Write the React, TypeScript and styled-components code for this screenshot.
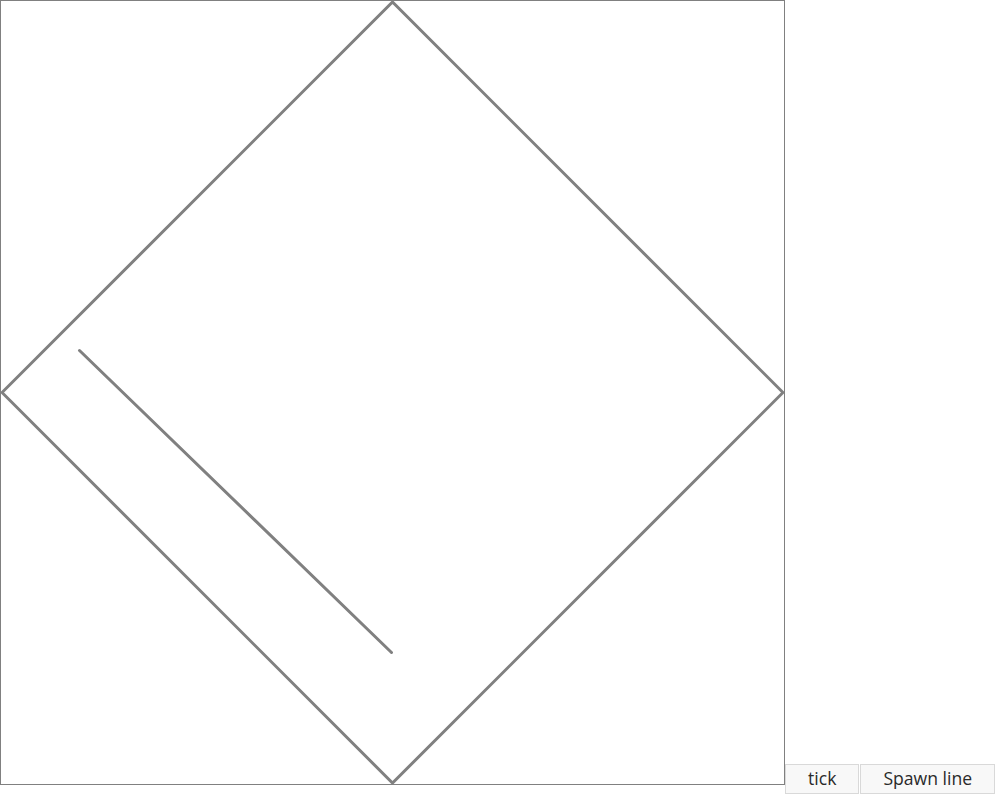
import React, { useState } from 'react'
import styled, { createGlobalStyle } from 'styled-components'

const GlobalStyle = createGlobalStyle`
  body {
    margin: 0;
    background: #fff;
    font-family: 'Open Sans', 'Noto Sans', sans-serif;
  }
`

const Stage = styled.div`
  display: flex;
  align-items: baseline;
`

const Board = styled.svg`
  display: block;
  width: 783px;
  height: 783px;
  border: 1px solid #808080;
  flex: none;
`

const Controls = styled.div`
  display: flex;
  align-items: baseline;
  gap: 1px;
  flex: none;
`

const Button = styled.button`
  flex: none;
  height: 30px;
  padding: 0 22px 2px;
  white-space: nowrap;
  font-family: 'Open Sans', 'Noto Sans', sans-serif;
  font-size: 17.6px;
  color: #2a2a2a;
  background: #f8f8f8;
  border: 1px solid #d9d9d9;
  border-radius: 0;
  cursor: pointer;

  &:hover {
    background: #eee;
  }
`

type Line = { x1: number; y1: number; x2: number; y2: number }

const SIZE = 783
const HALF = SIZE / 2

export default function App() {
  const [lines, setLines] = useState<Line[]>([
    { x1: 79.5, y1: 350.5, x2: 391.5, y2: 652.5 },
  ])

  const tick = () => {
    setLines(ls => ls.map(l => ({ ...l })))
  }

  const spawn = () => {
    const a = Math.random() * Math.PI * 2
    const cx = HALF + (Math.random() - 0.5) * 300
    const cy = HALF + (Math.random() - 0.5) * 300
    const r = 100 + Math.random() * 120
    setLines(ls => [
      ...ls,
      {
        x1: cx - Math.cos(a) * r,
        y1: cy - Math.sin(a) * r,
        x2: cx + Math.cos(a) * r,
        y2: cy + Math.sin(a) * r,
      },
    ])
  }

  return (
    <>
      <GlobalStyle />
      <Stage>
        <Board viewBox={`0 0 ${SIZE} ${SIZE}`}>
          <polygon
            points={`${HALF},1 ${SIZE - 1},${HALF} ${HALF},${SIZE - 1} 1,${HALF}`}
            fill="none"
            stroke="#808080"
            strokeWidth={3}
          />
          {lines.map((l, i) => (
            <line
              key={i}
              x1={l.x1 - 1}
              y1={l.y1 - 1}
              x2={l.x2 - 1}
              y2={l.y2 - 1}
              stroke="#808080"
              strokeWidth={3}
              strokeLinecap="round"
            />
          ))}
        </Board>
        <Controls>
          <Button onClick={tick}>tick</Button>
          <Button onClick={spawn}>Spawn line</Button>
        </Controls>
      </Stage>
    </>
  )
}
